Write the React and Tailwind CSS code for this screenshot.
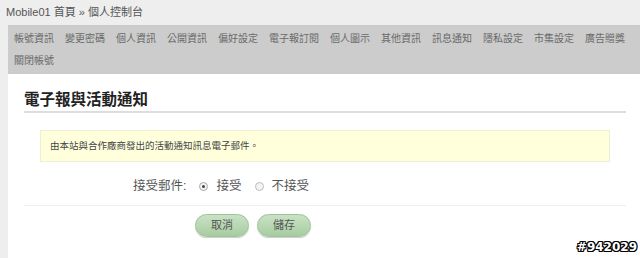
export default function App() {
  const nav = ["帳號資訊","變更密碼","個人資訊","公開資訊","偏好設定","電子報訂閱","個人圖示","其他資訊","訊息通知","隱私設定","市集設定","廣告贈獎","關閉帳號"];
  const font = { fontFamily: '"Liberation Sans", "Noto Sans CJK TC", sans-serif' };
  return (
    <div className="relative w-[640px] h-[258px] overflow-hidden bg-[#eeeeee] flex flex-col" style={font}>
      <div className="h-[25px] pl-[6px] flex items-center text-[11px] text-[#555] shrink-0">
        Mobile01 首頁 » 個人控制台
      </div>
      <div className="ml-[8px] bg-white flex-1 flex flex-col">
        <div className="bg-[#cccccc] h-[49px] pl-[6px] pr-[2px] pt-[3px] flex flex-wrap content-start gap-x-[11px] text-[10px] text-[#6a6a6a]">
          {nav.map((n) => (
            <span key={n} className="h-[22px] leading-[22px] whitespace-nowrap">{n}</span>
          ))}
        </div>
        <div className="pl-[16px] pr-[14px]">
          <div className="mt-[16px] text-[15.5px] font-bold text-[#222] leading-[20px] pb-[1px] border-b-2 border-[#dddddd]">
            電子報與活動通知
          </div>
          <div className="mt-[17px] mx-[16px] h-[32px] bg-[#ffffdc] border border-[#eeeed0] flex items-center pl-[9px] text-[9.5px] text-[#444]">
            由本站與合作廠商發出的活動通知訊息電子郵件。
          </div>
          <div className="mt-[15px] h-[18px] flex items-center pl-[109px] text-[12.5px] text-[#555]">
            <span>接受郵件:</span>
            <span className="ml-[13px] w-[9px] h-[9px] rounded-full border border-[#aaa] bg-[#f4f4f4] flex items-center justify-center">
              <span className="w-[3px] h-[3px] rounded-full bg-[#444]"></span>
            </span>
            <span className="ml-[8px]">接受</span>
            <span className="ml-[13px] w-[9px] h-[9px] rounded-full border border-[#bbb] bg-[#f4f4f4]"></span>
            <span className="ml-[8px]">不接受</span>
          </div>
          <div className="mt-[10px] border-t border-[#eeeeee]"></div>
          <div className="mt-[8px] flex gap-[8px] pl-[171px]">
            <button className="w-[54px] h-[23px] rounded-full border border-[#9cc496] bg-gradient-to-b from-[#c9e2c4] to-[#a7cca1] text-[11px] text-[#555] shadow-[0_1px_1px_rgba(0,0,0,0.2)]">取消</button>
            <button className="w-[54px] h-[23px] rounded-full border border-[#9cc496] bg-gradient-to-b from-[#c9e2c4] to-[#a7cca1] text-[11px] text-[#555] shadow-[0_1px_1px_rgba(0,0,0,0.2)]">儲存</button>
          </div>
        </div>
      </div>
      <div
        className="absolute right-[3px] bottom-[4px] text-[12px] font-bold text-white leading-[14px]"
        style={{ fontFamily: '"DejaVu Sans", sans-serif', textShadow: "1px 0 0 #000, -1px 0 0 #000, 0 1px 0 #000, 0 -1px 0 #000, 1px 1px 0 #000, -1px -1px 0 #000, 1px -1px 0 #000, -1px 1px 0 #000" }}
      >
        #942029
      </div>
    </div>
  );
}
